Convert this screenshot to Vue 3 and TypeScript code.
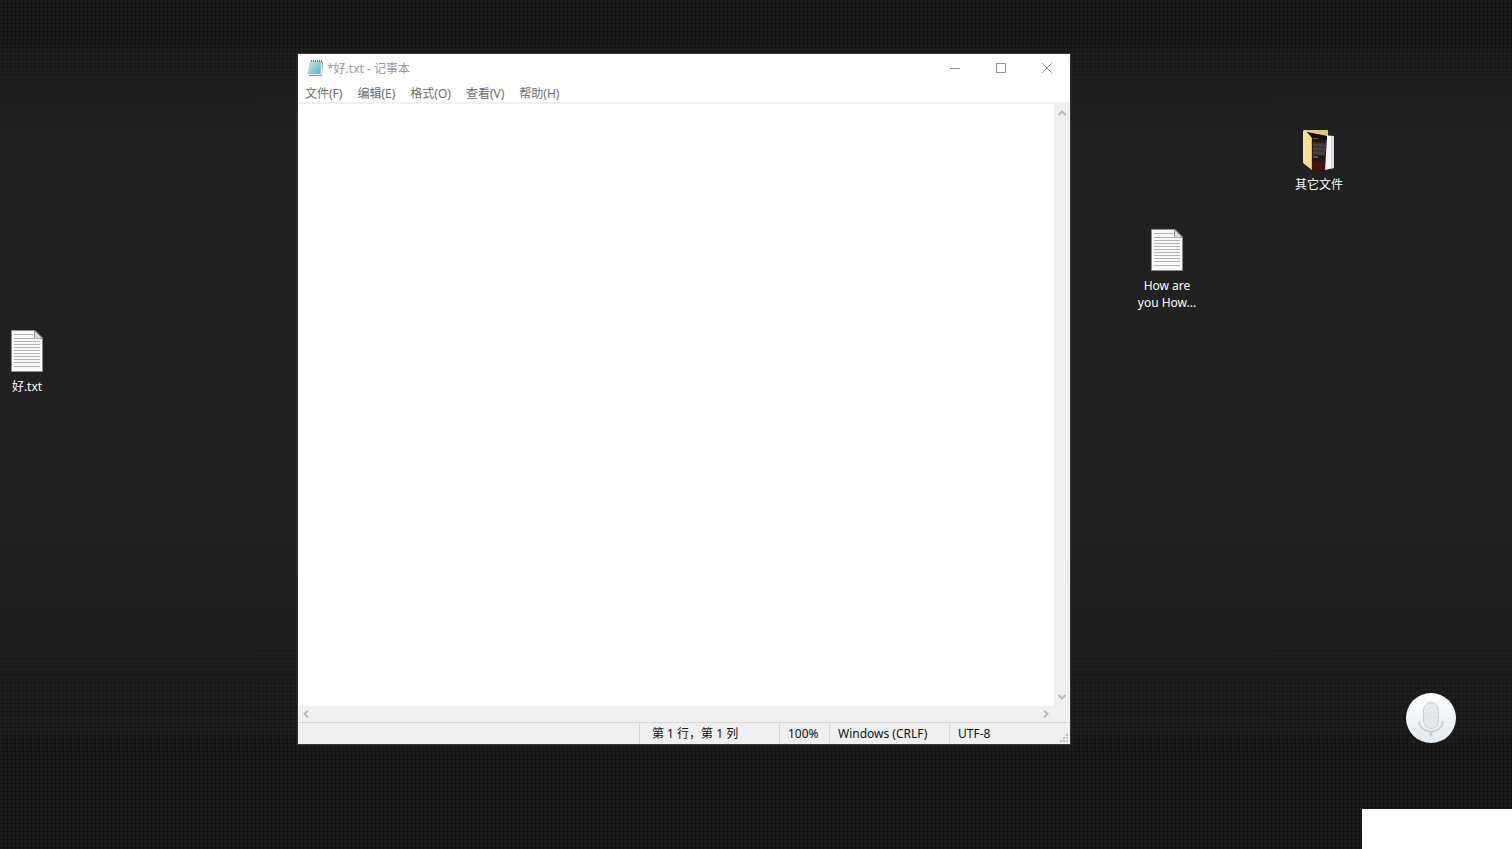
<script setup lang="ts">
import { ref } from 'vue'

interface Menu {
  label: string
  key: string
}

interface DesktopFile {
  id: string
  kind: 'text' | 'folder'
  lines: string[]
}

const menus: Menu[] = [
  { label: '文件', key: 'F' },
  { label: '编辑', key: 'E' },
  { label: '格式', key: 'O' },
  { label: '查看', key: 'V' },
  { label: '帮助', key: 'H' },
]

const files: DesktopFile[] = [
  { id: 'hao', kind: 'text', lines: ['好.txt'] },
  { id: 'how', kind: 'text', lines: ['How are', 'you How...'] },
  { id: 'other', kind: 'folder', lines: ['其它文件'] },
]

const content = ref('')
const ruled = [5, 9, 12, 15, 18, 21, 24, 27, 30, 33, 37]
</script>

<template>
  <main class="desktop">
    <button v-for="file in files" :key="file.id" type="button" class="file" :class="'file-' + file.id">
      <svg v-if="file.kind === 'text'" class="file-icon" viewBox="0 0 32 42" aria-hidden="true">
        <path d="M.5.5H24L31.5 8v33.500H.5z" fill="#fafafa" stroke="#8d8d8d" />
        <path d="M23.500.500V8.500H31.500z" fill="#dcdcdc" stroke="#8d8d8d" />
        <path
          v-for="y in ruled"
          :key="y"
          :d="`M3 ${y - 0.5}H${y < 9 ? 22 : 29}`"
          stroke="#b2b2b2"
        />
      </svg>
      <svg v-else class="file-icon" viewBox="0 0 32 42" aria-hidden="true">
        <path d="M0 1 1 0H25V7L9 36 0 31z" fill="#e6c66e" />
        <path d="M19 5 31 6V38L22 40z" fill="#f4f4f6" />
        <path d="M28 6 31 6V38L28 38.500z" fill="#dcdde2" />
        <path d="M3 2 24 6 22 41 9 38z" fill="#2a1512" />
        <path d="M3 2 24 6 23.800 10 8 8z" fill="#100a09" />
        <path d="M10 12 23 13 22.500 26 10 25z" fill="#3b3536" />
        <path d="M10 14.500 22 15.500M10 18.500 22 19.500M10 22.500 22 23.500" stroke="#595052" stroke-width=".8" />
        <path d="M10 8.500H15" stroke="#80572c" />
        <path d="M10 26.500 15 27.500" stroke="#287bc2" stroke-width="1.600" />
        <path d="M9 31 22 33V41L9 38z" fill="#47130f" />
        <path d="M0 1 3 1 9 8V40L0 33z" fill="#f9df8f" />
        <path d="M8.500 8V39" stroke="#d6b25b" stroke-width=".8" />
      </svg>
      <span class="file-name">
        <span v-for="line in file.lines" :key="line" class="file-line">{{ line }}</span>
      </span>
    </button>

    <section class="window" aria-label="记事本">
      <header class="titlebar">
        <svg class="app-icon" viewBox="0 0 16 16" aria-hidden="true">
          <defs>
            <linearGradient id="cover" x1="0" y1="0" x2="1" y2="1">
              <stop offset="0" stop-color="#c3e6ec" />
              <stop offset=".5" stop-color="#8fd0da" />
              <stop offset="1" stop-color="#5cb3c2" />
            </linearGradient>
          </defs>
          <path d="M2 15.500H14.500L15.500 2" fill="none" stroke="#9c8766" />
          <path d="M3 1H15V14.500H1.500z" fill="#edf5f5" />
          <path d="M3 1H14.500L13.500 14H.5z" fill="url(#cover)" />
          <path d="M4.500 0V2M6.500 0V2M8.500 0V2M10.500 0V2M12.500 0V2M14.500 0V2" stroke="#6d7f82" />
        </svg>
        <h1 class="title">*好.txt - 记事本</h1>
        <div class="controls">
          <button type="button" class="control" aria-label="最小化">
            <svg viewBox="0 0 10 10" aria-hidden="true"><path d="M0 5.500H10" /></svg>
          </button>
          <button type="button" class="control" aria-label="最大化">
            <svg viewBox="0 0 10 10" aria-hidden="true"><path d="M.5.5H9.500V9.500H.5z" /></svg>
          </button>
          <button type="button" class="control" aria-label="关闭">
            <svg viewBox="0 0 10 10" aria-hidden="true"><path d="M0 0 10 10M10 0 0 10" /></svg>
          </button>
        </div>
      </header>

      <nav class="menubar" aria-label="菜单">
        <button v-for="menu in menus" :key="menu.key" type="button" class="menu">{{ menu.label }}({{ menu.key }})</button>
      </nav>

      <div class="body">
        <textarea v-model="content" class="editor" aria-label="文本编辑器" spellcheck="false"></textarea>
        <div class="vscroll">
          <button type="button" class="arrow" aria-label="向上滚动">
            <svg viewBox="0 0 8 6" aria-hidden="true"><path d="M.5 5 4 1.500 7.500 5" /></svg>
          </button>
          <button type="button" class="arrow" aria-label="向下滚动">
            <svg viewBox="0 0 8 6" aria-hidden="true"><path d="M.5 1 4 4.500 7.500 1" /></svg>
          </button>
        </div>
      </div>
      <div class="hscroll">
        <button type="button" class="arrow side" aria-label="向左滚动">
          <svg viewBox="0 0 6 8" aria-hidden="true"><path d="M5 .5 1.500 4 5 7.500" /></svg>
        </button>
        <button type="button" class="arrow side" aria-label="向右滚动">
          <svg viewBox="0 0 6 8" aria-hidden="true"><path d="M1 .5 4.500 4 1 7.500" /></svg>
        </button>
      </div>

      <footer class="status">
        <span class="cell position">第 1 行，第 1 列</span>
        <span class="cell zoom">100%</span>
        <span class="cell ending">Windows (CRLF)</span>
        <span class="cell encoding">UTF-8
          <svg class="grip" viewBox="0 0 8 8" aria-hidden="true">
            <path d="M6 0h2v2H6zM3 3h2v2H3zM6 3h2v2H6zM0 6h2v2H0zM3 6h2v2H3zM6 6h2v2H6z" />
          </svg>
        </span>
      </footer>
    </section>

    <button type="button" class="mic" aria-label="语音输入">
      <svg viewBox="0 0 50 50" aria-hidden="true">
        <defs>
          <linearGradient id="disc" x1="0" y1="0" x2="0" y2="1">
            <stop offset="0" stop-color="#ffffff" />
            <stop offset="1" stop-color="#e3ebf0" />
          </linearGradient>
          <pattern id="mesh" width="4" height="4" patternUnits="userSpaceOnUse">
            <rect width="4" height="4" fill="#e2e5e9" />
            <rect width="1" height="1" fill="#f7f8fa" />
            <rect x="2" y="2" width="1" height="1" fill="#f7f8fa" />
          </pattern>
        </defs>
        <circle cx="25" cy="25" r="25" fill="url(#disc)" />
        <rect x="17.500" y="9.500" width="15" height="26" rx="7.500" fill="url(#mesh)" stroke="#ccd0d5" />
        <path d="M13 28C14 42 36 42 37 28" fill="none" stroke="#d0d4d9" stroke-width="2" />
        <path d="M22 38.500H28L26.500 40V43.500H23.500V40z" fill="#cbd0d5" />
      </svg>
    </button>
    <div class="panel"></div>
  </main>
</template>

<style>
html,
body,
#app {
  height: 100%;
}
body {
  margin: 0;
  overflow: hidden;
}
</style>

<style scoped>
.desktop {
  position: relative;
  height: 100%;
  overflow: hidden;
  background:
    linear-gradient(to bottom, transparent, #202020 16%, #202020 62%, transparent),
    repeating-linear-gradient(to right, transparent 0 3px, rgba(0, 0, 0, 0.35) 3px 4px),
    repeating-linear-gradient(to bottom, transparent 0 3px, rgba(0, 0, 0, 0.35) 3px 4px),
    #1b1b1b;
  font-family: "Noto Sans", "Noto Sans CJK SC", sans-serif;
  font-size: 12px;
  line-height: 17px;
}

button {
  margin: 0;
  padding: 0;
  border: 0;
  background: none;
  font: inherit;
  color: inherit;
}

.file {
  position: absolute;
  display: flex;
  flex-direction: column;
  align-items: center;
  gap: 6px;
  width: 76px;
  color: #fff;
}
.file-icon {
  width: 32px;
  height: 42px;
}
.file-line {
  display: block;
  white-space: nowrap;
}
.file-hao {
  left: -11px;
  top: 330px;
}
.file-how {
  right: 307px;
  top: 229px;
}
.file-other {
  right: 155px;
  top: 130px;
  gap: 4px;
}

.window {
  position: absolute;
  inset: 54px 442px 105px 298px;
  display: flex;
  flex-direction: column;
  background: #fff;
  box-shadow: 0 0 0 1px #383838;
}

.titlebar {
  display: flex;
  align-items: center;
  height: 28px;
  padding-left: 9px;
  color: #999;
}
.app-icon {
  width: 16px;
  height: 16px;
}
.title {
  flex: 1;
  margin: 0 0 0 4px;
  font-size: 12px;
  font-weight: 400;
}
.controls {
  display: flex;
}
.control {
  display: flex;
  align-items: center;
  justify-content: center;
  width: 46px;
  height: 28px;
}
.control svg {
  width: 10px;
  height: 10px;
  fill: none;
  stroke: #929292;
}

.menubar {
  display: flex;
  align-items: flex-end;
  gap: 15px;
  height: 20px;
  padding-left: 7px;
  border-bottom: 2px solid #f0f0f0;
  color: #6d6d6d;
}
.menu {
  white-space: nowrap;
}

.body {
  flex: 1;
  display: flex;
  min-height: 0;
}
.editor {
  flex: 1;
  min-width: 0;
  box-sizing: border-box;
  padding: 2px 4px;
  border: 0;
  outline: 0;
  resize: none;
  overflow: hidden;
  background: #fff;
  font: inherit;
}
.vscroll,
.hscroll {
  display: flex;
  justify-content: space-between;
  background: #f0f0f0;
}
.vscroll {
  flex-direction: column;
  width: 16px;
}
.hscroll {
  height: 16px;
  padding-right: 16px;
}
.arrow {
  display: flex;
  align-items: center;
  justify-content: center;
  width: 16px;
  height: 18px;
}
.arrow svg {
  width: 8px;
  height: 6px;
  fill: none;
  stroke: #b8b8b8;
  stroke-width: 2;
}
.arrow.side {
  width: 16px;
  height: 16px;
}
.arrow.side svg {
  width: 6px;
  height: 8px;
}

.status {
  display: flex;
  justify-content: flex-end;
  align-items: center;
  height: 21px;
  border-top: 1px solid #d7d7d7;
  background: #f0f0f0;
  color: #111;
}
.cell {
  box-sizing: border-box;
  padding-left: 8px;
  border-left: 1px solid #d7d7d7;
  line-height: 20px;
  white-space: nowrap;
}
.position {
  width: 140px;
  padding-left: 12px;
}
.zoom {
  width: 50px;
}
.ending {
  width: 120px;
}
.encoding {
  display: flex;
  justify-content: space-between;
  width: 121px;
}
.grip {
  align-self: flex-end;
  width: 8px;
  height: 8px;
  margin: 0 2px 2px 0;
  fill: #bfbfbf;
}

.mic {
  position: absolute;
  right: 56px;
  bottom: 106px;
  width: 50px;
  height: 50px;
}
.mic svg {
  display: block;
  width: 50px;
  height: 50px;
}

.panel {
  position: absolute;
  right: 0;
  bottom: 0;
  width: 150px;
  height: 40px;
  background: #fff;
}
</style>
